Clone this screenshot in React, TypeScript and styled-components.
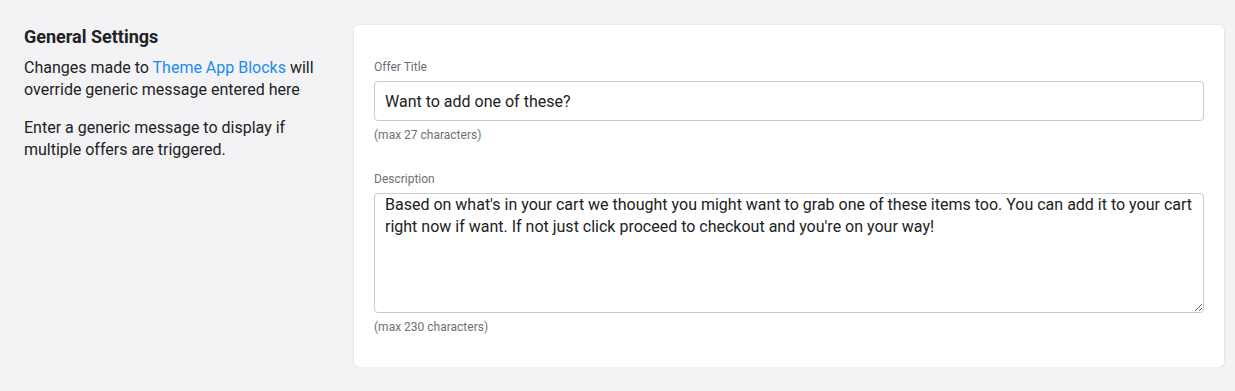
import { createGlobalStyle, styled } from "styled-components";

const GlobalStyle = createGlobalStyle`
  body {
    margin: 0;
    background: #f3f3f5;
    font-family: Roboto, "Liberation Sans", sans-serif;
    color: #202223;
  }
`;

export default function App() {
  return (
    <>
      <GlobalStyle />
      <Page>
        <Aside>
          <Heading>General Settings</Heading>
          <Paragraph>
            Changes made to <Link href="#">Theme App Blocks</Link> will override generic message entered here
          </Paragraph>
          <Paragraph>Enter a generic message to display if multiple offers are triggered.</Paragraph>
        </Aside>
        <Card>
          <Field>
            <Label>Offer Title</Label>
            <Input defaultValue="Want to add one of these?" />
            <Hint>(max 27 characters)</Hint>
          </Field>
          <Field>
            <Label>Description</Label>
            <TextArea defaultValue="Based on what's in your cart we thought you might want to grab one of these items too. You can add it to your cart right now if want. If not just click proceed to checkout and you're on your way!" />
            <Hint>(max 230 characters)</Hint>
          </Field>
        </Card>
      </Page>
    </>
  );
}

const Page = styled.main`
  display: flex;
  align-items: flex-start;
  gap: 24px;
  padding: 25px 11px 0 24px;
`;

const Aside = styled.section`
  width: 306px;
  flex-shrink: 0;
  padding-top: 1px;
`;

const Heading = styled.h2`
  margin: 0 0 9px;
  font-size: 18px;
  line-height: 22px;
  font-weight: 700;
`;

const Paragraph = styled.p`
  margin: 0 0 16px;
  font-size: 16px;
  line-height: 22px;
`;

const Link = styled.a`
  color: #1a8cf0;
  text-decoration: none;
`;

const Card = styled.section`
  flex: 1;
  display: flex;
  flex-direction: column;
  gap: 30px;
  padding: 35px 20px 33px;
  background: #fff;
  border-radius: 5px;
  box-shadow: 0 0 0 1px rgba(0, 0, 0, 0.03), 0 1px 2px rgba(0, 0, 0, 0.08);
`;

const Field = styled.div`
  display: flex;
  flex-direction: column;
`;

const Label = styled.label`
  font-size: 12px;
  line-height: 14px;
  color: #6d7175;
  margin-bottom: 7px;
`;

const Input = styled.input`
  box-sizing: border-box;
  height: 40px;
  padding: 0 10px;
  border: 1px solid #c9cccf;
  border-radius: 4px;
  font-family: inherit;
  font-size: 16px;
  color: #202223;
  outline: none;
`;

const TextArea = styled.textarea`
  box-sizing: border-box;
  height: 120px;
  padding: 0 10px;
  border: 1px solid #c9cccf;
  border-radius: 4px;
  font-family: inherit;
  font-size: 16px;
  line-height: 22px;
  color: #202223;
  resize: vertical;
  outline: none;
`;

const Hint = styled.span`
  margin-top: 7px;
  font-size: 12px;
  line-height: 14px;
  color: #6d7175;
`;
